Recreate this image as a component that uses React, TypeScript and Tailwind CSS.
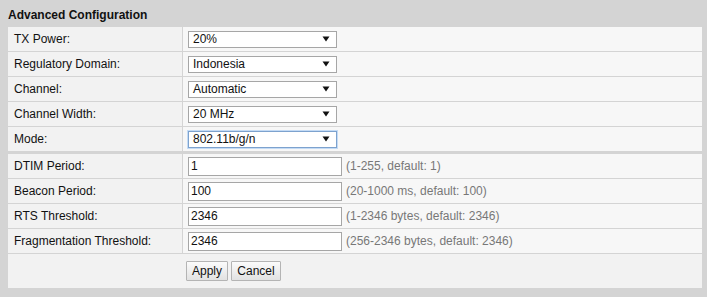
import React from "react";

const Arrow = () => (
  <svg width="8" height="6" viewBox="0 0 8 6" className="block">
    <path d="M0.5 0.5 L7.5 0.5 L4 5.5 Z" fill="#111" />
  </svg>
);

function Select({ value, focused }: { value: string; focused?: boolean }) {
  return (
    <div
      className={
        "flex h-[17px] w-[149px] items-center justify-between bg-white pl-[4px] pr-[6px] " +
        (focused ? "border border-[#7da2ce] shadow-[0_0_0_1px_#c4dbf5]" : "border border-[#a6a6a6]")
      }
    >
      <span className="text-[12px] leading-[14px] text-[#111]">{value}</span>
      <Arrow />
    </div>
  );
}

function Input({ value }: { value: string }) {
  return (
    <div className="flex h-[19px] w-[154px] items-center border border-[#a6a6a6] bg-white pl-[2px]">
      <span className="text-[12px] leading-[14px] text-[#111]">{value}</span>
    </div>
  );
}

function Row({ label, children }: { label: string; children: React.ReactNode }) {
  return (
    <div className="flex h-[24px] gap-px">
      <div className="flex w-[174px] shrink-0 items-center bg-[#f2f2f2] pl-[6px] text-[12px] leading-[14px] text-[#111]">
        {label}
      </div>
      <div className="flex flex-1 items-center bg-[#f7f7f7] pl-[5px]">{children}</div>
    </div>
  );
}

function Hint({ children }: { children: React.ReactNode }) {
  return <span className="ml-[4px] text-[12px] leading-[14px] text-[#777]">{children}</span>;
}

function Btn({ children, w }: { children: React.ReactNode; w: string }) {
  return (
    <div
      className={
        "flex h-[20px] items-center justify-center rounded-[1px] border border-[#b4b4b4] bg-gradient-to-b from-[#fbfbfb] to-[#e2e2e2] text-[12px] leading-[14px] text-[#111] " +
        w
      }
    >
      {children}
    </div>
  );
}

export default function App() {
  return (
    <div
      className="h-[297px] w-[707px] bg-[#d4d4d4] pl-[8px] pr-[5px]"
      style={{ fontFamily: '"Liberation Sans", Arial, sans-serif' }}
    >
      <div className="pt-[8px] text-[12px] font-bold leading-[14px] text-[#111]">Advanced Configuration</div>
      <div className="mt-[5px] flex flex-col gap-px">
        <Row label="TX Power:">
          <Select value="20%" />
        </Row>
        <Row label="Regulatory Domain:">
          <Select value="Indonesia" />
        </Row>
        <Row label="Channel:">
          <Select value="Automatic" />
        </Row>
        <Row label="Channel Width:">
          <Select value="20 MHz" />
        </Row>
        <Row label="Mode:">
          <Select value="802.11b/g/n" focused />
        </Row>
      </div>
      <div className="mt-[3px] flex flex-col gap-px">
        <Row label="DTIM Period:">
          <Input value="1" />
          <Hint>(1-255, default: 1)</Hint>
        </Row>
        <Row label="Beacon Period:">
          <Input value="100" />
          <Hint>(20-1000 ms, default: 100)</Hint>
        </Row>
        <Row label="RTS Threshold:">
          <Input value="2346" />
          <Hint>(1-2346 bytes, default: 2346)</Hint>
        </Row>
        <Row label="Fragmentation Threshold:">
          <Input value="2346" />
          <Hint>(256-2346 bytes, default: 2346)</Hint>
        </Row>
        <div className="flex h-[34px] gap-[3px] bg-[#f2f2f2] pl-[178px] pt-[7px]">
          <Btn w="w-[42px]">Apply</Btn>
          <Btn w="w-[50px]">Cancel</Btn>
        </div>
      </div>
    </div>
  );
}
